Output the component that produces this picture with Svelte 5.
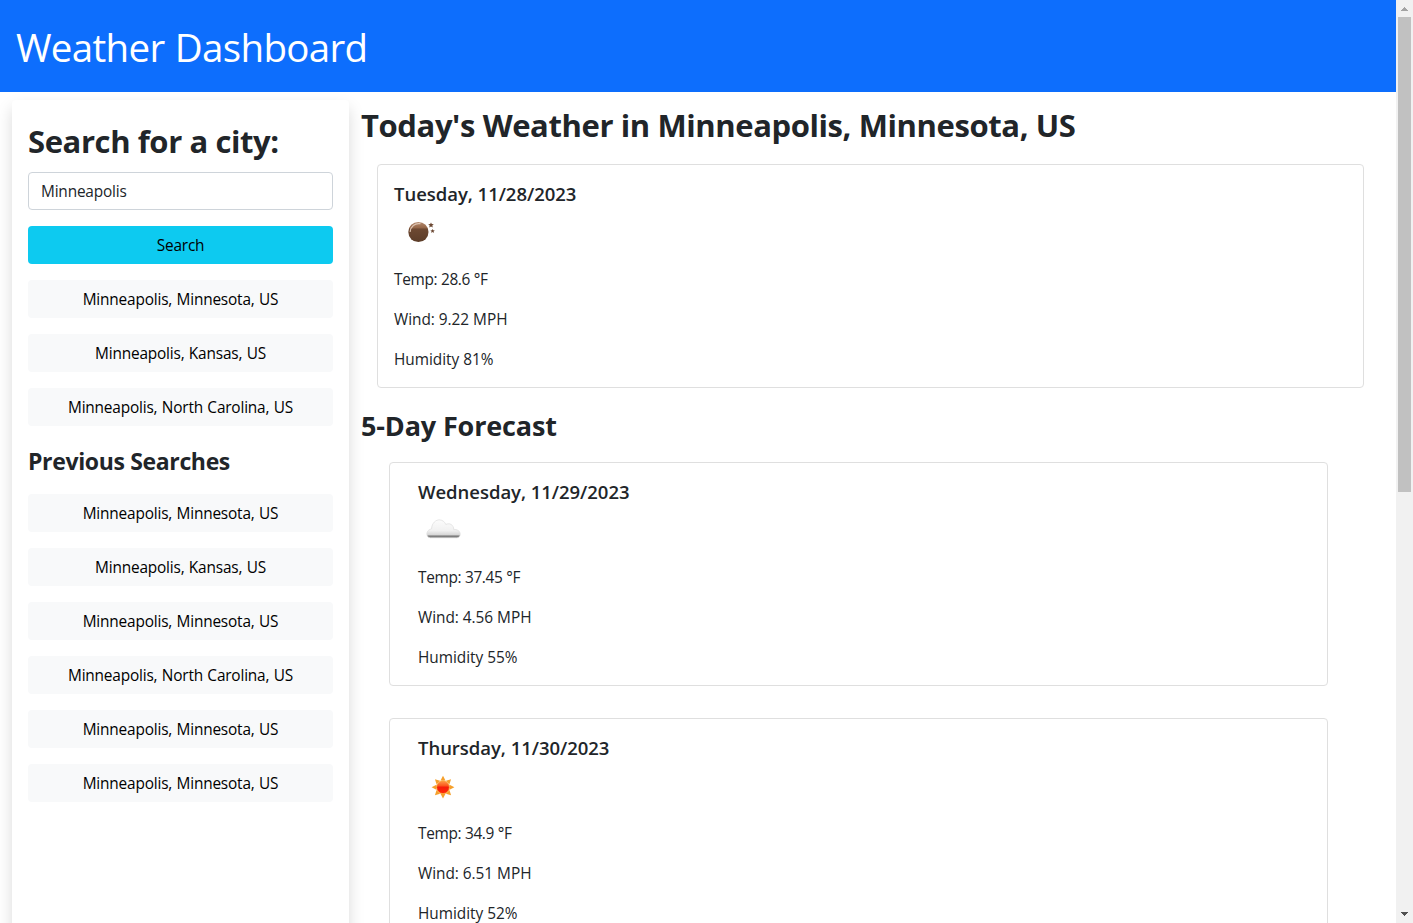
<script>
  const city = 'Minneapolis';
  const matches = ['Minneapolis, Minnesota, US', 'Minneapolis, Kansas, US', 'Minneapolis, North Carolina, US'];
  const previous = [
    'Minneapolis, Minnesota, US',
    'Minneapolis, Kansas, US',
    'Minneapolis, Minnesota, US',
    'Minneapolis, North Carolina, US',
    'Minneapolis, Minnesota, US',
    'Minneapolis, Minnesota, US'
  ];
  const today = { date: 'Tuesday, 11/28/2023', icon: 'night', temp: '28.6', wind: '9.22', humidity: 81 };
  const forecast = [
    { date: 'Wednesday, 11/29/2023', icon: 'cloud', temp: '37.45', wind: '4.56', humidity: 55 },
    { date: 'Thursday, 11/30/2023', icon: 'sun', temp: '34.9', wind: '6.51', humidity: 52 }
  ];
  const rays = [0, 45, 90, 135, 180, 225, 270, 315];
</script>

{#snippet weatherIcon(kind)}
  <svg class="icon" width="50" height="50" viewBox="0 0 50 50" aria-hidden="true">
    {#if kind === 'night'}
      <defs>
        <linearGradient id="moon" x1="0" y1="0" x2="0" y2="1">
          <stop offset="0" stop-color="#b48a6e" />
          <stop offset=".28" stop-color="#96684a" />
          <stop offset=".36" stop-color="#6d4932" />
          <stop offset="1" stop-color="#5c3d29" />
        </linearGradient>
      </defs>
      <circle cx="24.4" cy="24" r="10.1" fill="url(#moon)" />
      <path d="M16.2 23.5a8.4 8.4 0 0 1 9.8-7.8" fill="none" stroke="#dcc3b1" stroke-width="1.2" stroke-linecap="round" />
      <path d="M37 14.4l.8 1.7 2 .1-1.5 1.3.5 2-1.8-1.1-1.8 1.1.5-2-1.5-1.3 2-.1z" fill="#6c4934" />
      <path d="M38.6 20.9l.7 1.4 1.5.1-1.2 1 .4 1.6-1.4-.9-1.4.9.4-1.6-1.2-1 1.5-.1z" fill="#6c4934" />
    {:else if kind === 'cloud'}
      <defs>
        <linearGradient id="cloud" x1="0" y1="0" x2="0" y2="1">
          <stop offset="0" stop-color="#fcfcfc" />
          <stop offset=".6" stop-color="#f1f1f1" />
          <stop offset=".82" stop-color="#d8d8d8" />
          <stop offset=".9" stop-color="#858585" />
          <stop offset="1" stop-color="#6c6c6c" />
        </linearGradient>
      </defs>
      <path
        d="M12.5 31.8C7.5 31.5 7.5 24 13.5 22.9c.4-5.8 4.3-9.4 8.3-9 3.1.2 5 2.2 6 4.6 3.5-2 8 .2 8 5.3 3-.9 6.4 1.2 6.4 4.3 0 2.3-1.4 3.7-3.4 3.7z"
        fill="url(#cloud)"
        stroke="#dcdcdc"
        stroke-width=".7"
      />
    {:else}
      <defs>
        <linearGradient id="sun" x1="0" y1="0" x2="0" y2="1">
          <stop offset="0" stop-color="#ff9b4a" />
          <stop offset=".38" stop-color="#fb5a1e" />
          <stop offset=".5" stop-color="#f51d0a" />
          <stop offset="1" stop-color="#ff2a08" />
        </linearGradient>
      </defs>
      {#each rays as angle}
        <path d="M25 13.8l2.5 4.8h-5z" fill="#f5a02c" transform="rotate({angle} 25 25.2)" />
      {/each}
      <circle cx="25" cy="25.2" r="6.4" fill="url(#sun)" stroke="#f9a030" stroke-width=".9" />
    {/if}
  </svg>
{/snippet}

{#snippet card(day)}
  <article class="card">
    <h5>{day.date}</h5>
    <div class="picture">{@render weatherIcon(day.icon)}</div>
    <p class="temp">Temp: {day.temp} °F</p>
    <p>Wind: {day.wind} MPH</p>
    <p>Humidity {day.humidity}%</p>
  </article>
{/snippet}

<div class="window">
  <div class="page">
    <header><h1>Weather Dashboard</h1></header>
    <div class="columns">
      <aside>
        <h2>Search for a city:</h2>
        <input type="text" value={city} aria-label="City" />
        <button class="search">Search</button>
        {#each matches as name}<button>{name}</button>{/each}
        <h4>Previous Searches</h4>
        {#each previous as name}<button>{name}</button>{/each}
      </aside>
      <main>
        <h2>Today's Weather in Minneapolis, Minnesota, US</h2>
        <section class="today">{@render card(today)}</section>
        <h3>5-Day Forecast</h3>
        <section class="forecast">
          {#each forecast as day}{@render card(day)}{/each}
        </section>
      </main>
    </div>
  </div>
  <div class="scrollbar">
    <svg width="17" height="17" viewBox="0 0 17 17" shape-rendering="crispEdges"><path d="M8 7h1v1h1v1h1v1h1v1H5v-1h1V9h1V8h1z" fill="#a3a3a3" /></svg>
    <div class="thumb"></div>
    <svg width="17" height="17" viewBox="0 0 17 17" shape-rendering="crispEdges"><path d="M5 6h7v1h-1v1h-1v1H9v1H8V9H7V8H6V7H5z" fill="#505050" /></svg>
  </div>
</div>

<style>
  :global(body) { margin: 0; overflow: hidden; background: #fff; }
  * { box-sizing: border-box; }
  .window {
    display: flex;
    height: 923px;
    overflow: hidden;
    font: 400 15.4px/24px 'Open Sans', 'Noto Sans', sans-serif;
    letter-spacing: -.18px;
    word-spacing: .6px;
    color: #212529;
  }
  .page { flex: 1; min-width: 0; height: 923px; overflow: hidden; }
  h1, h2, h3, h4, h5, p { margin: 0; white-space: nowrap; word-spacing: 0; }
  header { height: 92px; padding: 23px 16px 21px; background: #0d6efd; color: #fff; }
  h1 { font-size: 38.5px; font-weight: 400; line-height: 48px; letter-spacing: -.68px; word-spacing: 1px; }
  .columns { display: flex; gap: 12px; padding: 8px 0 0 12px; }
  aside {
    width: 337px;
    height: 1300px;
    padding: 22px 16px;
    border-radius: 4px;
    box-shadow: 0 8px 16px rgba(0, 0, 0, .15);
    display: flex;
    flex-direction: column;
  }
  h2 { font-size: 31px; line-height: 38px; font-weight: 700; letter-spacing: -.4px; }
  h3 { font-size: 27px; line-height: 34px; font-weight: 700; letter-spacing: -.15px; }
  h4 { font-size: 23px; line-height: 28px; font-weight: 700; letter-spacing: -.35px; margin: 5px 0 19px; }
  h5 { font-size: 18.5px; line-height: 24px; font-weight: 600; letter-spacing: -.03px; }
  input, button { height: 38px; flex: none; border-radius: 4px; font: inherit; letter-spacing: inherit; word-spacing: inherit; }
  input { margin: 12px 0 16px; padding: 6px 12px; border: 1px solid #ced4da; background: #fff; color: #212529; outline: 0; }
  button { margin: 0 0 16px; padding: 2px 0 0; border: 0; background: #f8f9fa; color: #000; }
  .search { background: #0dcaf0; }
  main { flex: 1; min-width: 0; padding: 6px 32px 0 0; }
  .today { padding: 20px 0 21px 16px; }
  .forecast { display: flex; flex-direction: column; gap: 32px; padding: 19px 36px 0 28px; }
  .card { height: 224px; padding: 17px 16px 14px; border: 1px solid #dfdfdf; border-radius: 4px; }
  .forecast .card { padding-left: 28px; }
  .picture { height: 62px; padding-top: 2px; }
  .icon { display: block; }
  p { height: 24px; margin-bottom: 16px; letter-spacing: -.03px; }
  .temp { letter-spacing: -.32px; }
  .scrollbar { width: 17px; background: #f1f1f1; display: flex; flex-direction: column; }
  .scrollbar svg { flex: none; display: block; }
  .thumb { width: 13px; height: 475px; margin: 0 2px auto; background: #c1c1c1; }
</style>
